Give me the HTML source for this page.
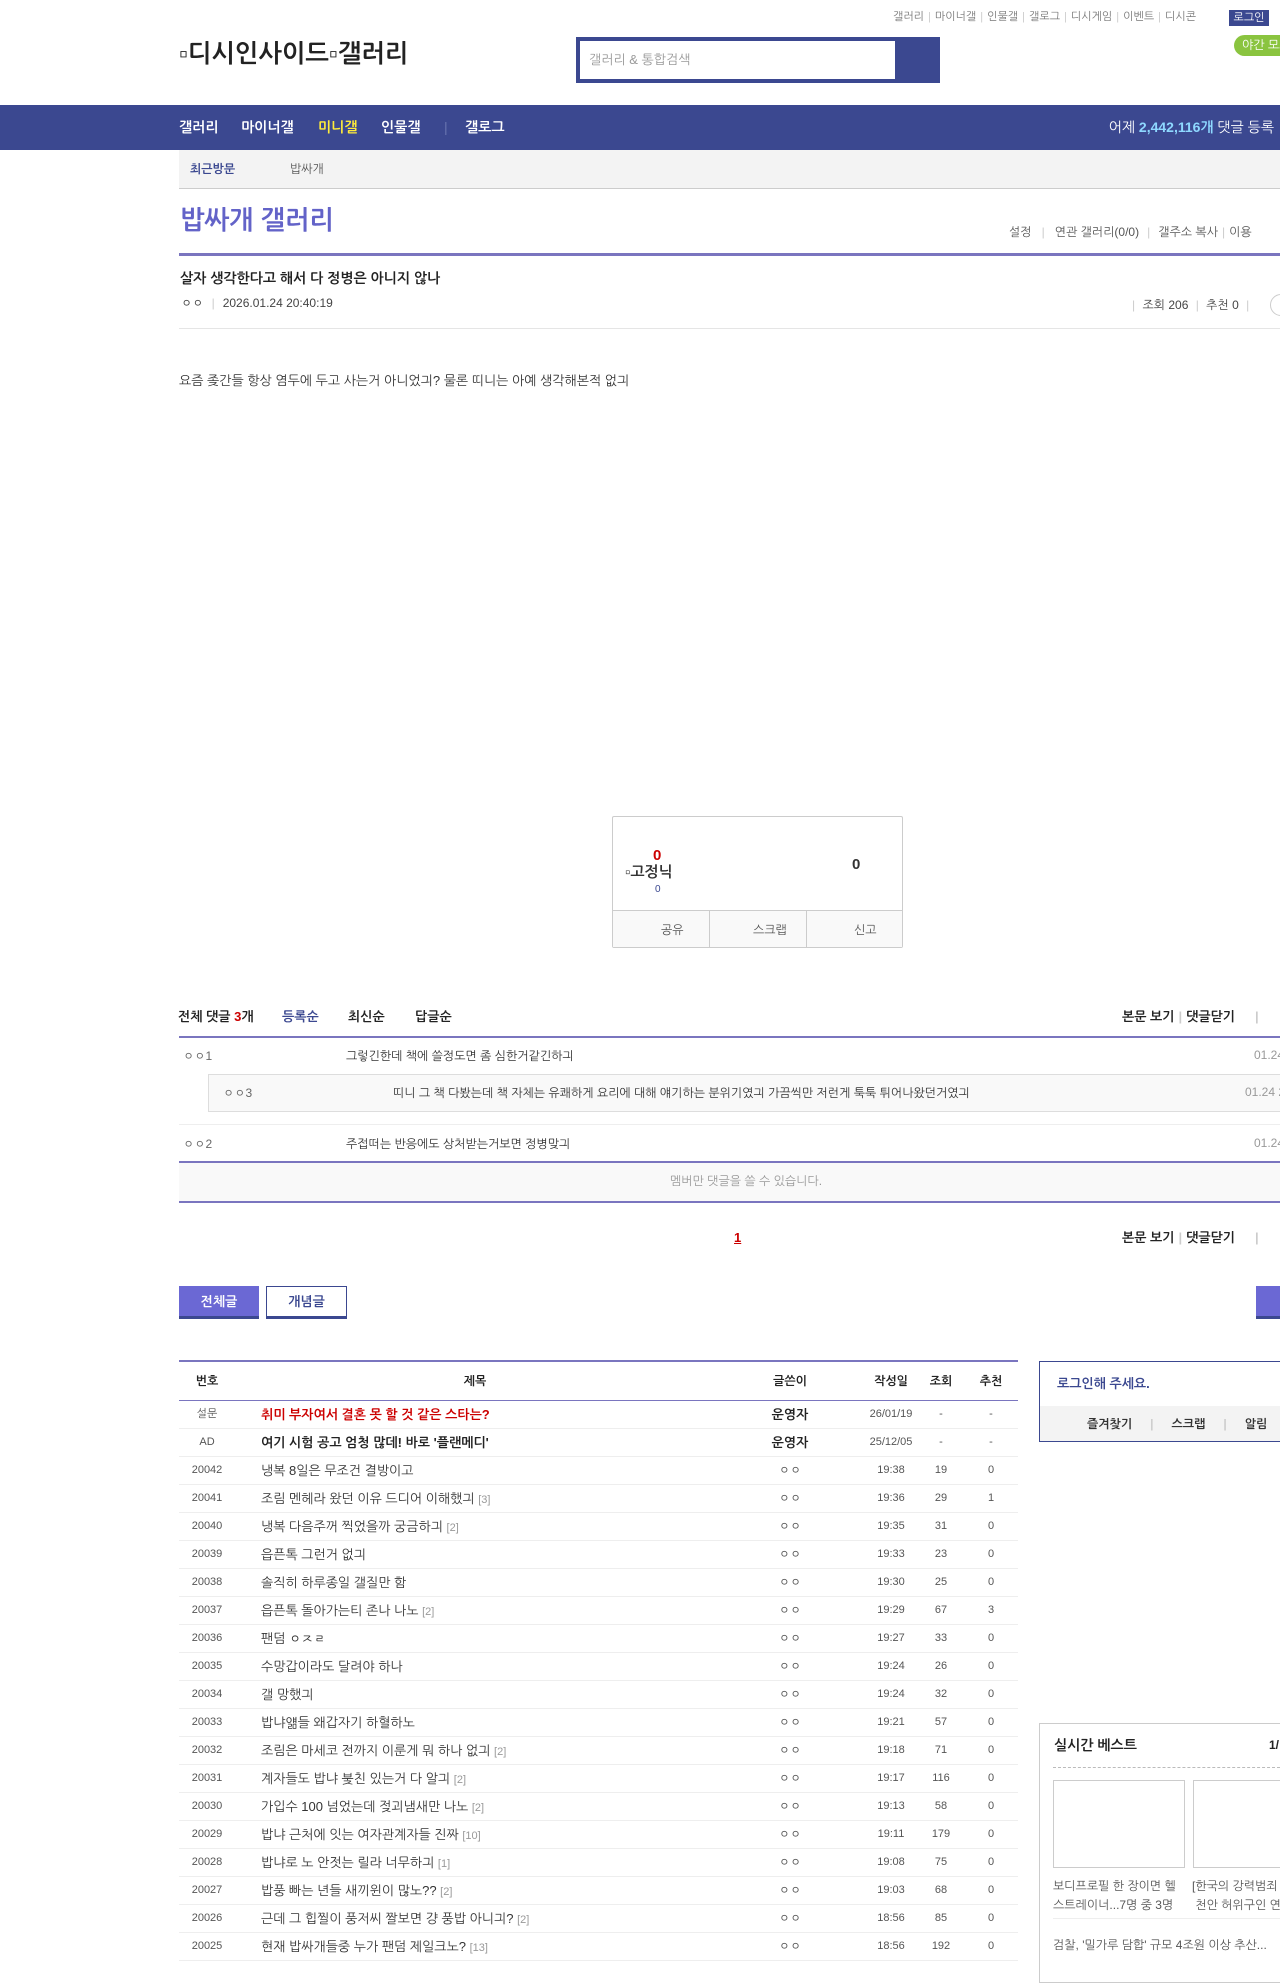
<!DOCTYPE html>
<html><head><meta charset="utf-8"><style>
*{margin:0;padding:0;box-sizing:border-box}
body{width:1280px;height:1960px;overflow:hidden;background:#fff;font-family:"Liberation Sans","NanumGothic","Noto Sans CJK KR",sans-serif;color:#333;position:relative;font-size:13px}
.a{position:absolute;white-space:nowrap}
.sep{color:#ccc;margin:0 4px}
</style></head><body>
<div class="a" style="top:10px;left:893px;font-size:11px;color:#777">갤러리<span class="sep">|</span>마이너갤<span class="sep">|</span>인물갤<span class="sep">|</span>갤로그<span class="sep">|</span>디시게임<span class="sep">|</span>이벤트<span class="sep">|</span>디시콘</div>
<div class="a" style="top:10px;left:1229px;width:40px;height:16px;background:#3b4890;color:#fff;font-size:11px;text-align:center;line-height:16px">로그인</div>
<div class="a" style="top:35px;left:1234px;width:60px;height:21px;background:#8ac43f;color:#fff;font-size:12px;line-height:21px;border-radius:11px;padding-left:8px">야간 모드</div>
<div class="a" style="top:40px;left:179px;font-size:25px;font-weight:bold;color:#222">▫디시인사이드▫갤러리</div>
<div class="a" style="top:37px;left:576px;width:364px;height:46px;background:#3b4890"></div>
<div class="a" style="top:41px;left:580px;width:315px;height:38px;background:#fff;color:#999;font-size:13px;line-height:38px;padding-left:9px">갤러리 &amp; 통합검색</div>
<div class="a" style="top:105px;left:0;width:1280px;height:45px;background:#3b4890"></div>
<div class="a" style="top:119px;left:179px;font-size:14px;font-weight:bold;color:#fff">갤러리</div>
<div class="a" style="top:119px;left:241px;font-size:14px;font-weight:bold;color:#fff">마이너갤</div>
<div class="a" style="top:119px;left:318px;font-size:14px;font-weight:bold;color:#ffec3a">미니갤</div>
<div class="a" style="top:119px;left:381px;font-size:14px;font-weight:bold;color:#fff">인물갤</div>
<div class="a" style="top:119px;left:444px;font-size:14px;color:#6874b0">|</div>
<div class="a" style="top:119px;left:465px;font-size:14px;font-weight:bold;color:#fff">갤로그</div>
<div class="a" style="top:119px;right:6px;font-size:14px;color:#fff">어제 <b style="color:#8ed8ff">2,442,116개</b> 댓글 등록</div>
<div class="a" style="top:150px;left:179px;width:1101px;height:39px;background:#f3f3f3;border-bottom:1px solid #ccc"></div>
<div class="a" style="top:162px;left:190px;font-size:12px;font-weight:bold;color:#3b4890">최근방문</div>
<div class="a" style="top:162px;left:290px;font-size:12px;color:#555">밥싸개</div>
<div class="a" style="top:205px;left:180px;font-size:26px;font-weight:bold;color:#6363c8">밥싸개 갤러리</div>
<div class="a" style="top:225px;left:1009px;font-size:12px;color:#555">설정<span class="sep" style="margin:0 10px">|</span>연관 갤러리(0/0)<span class="sep" style="margin:0 8px">|</span>갤주소 복사<span class="sep">|</span>이용</div>
<div class="a" style="top:253px;left:179px;width:1101px;height:3px;background:#7a75bf"></div>
<div class="a" style="top:270px;left:180px;font-size:14px;font-weight:bold;color:#222">살자 생각한다고 해서 다 정병은 아니지 않나</div>
<div class="a" style="top:296px;left:181px;font-size:12px;color:#444">ㅇㅇ<span class="sep" style="margin:0 8px">|</span>2026.01.24 20:40:19</div>
<div class="a" style="top:298px;left:1128px;font-size:12px;color:#444"><span class="sep">|</span> 조회 206 <span class="sep">|</span> 추천 0 <span class="sep">|</span></div>
<div class="a" style="top:294px;left:1270px;width:22px;height:22px;border:1px solid #ccc;border-radius:50%"></div>
<div class="a" style="top:328px;left:179px;width:1101px;height:1px;background:#e5e5e5"></div>
<div class="a" style="top:373px;left:179px;font-size:13px;color:#333">요즘 좆간들 항상 염두에 두고 사는거 아니었긔? 물론 띠니는 아예 생각해본적 없긔</div>
<div class="a" style="top:816px;left:612px;width:291px;height:132px;border:1px solid #ccc;border-radius:2px"></div>
<div class="a" style="top:910px;left:613px;width:289px;height:37px;background:#f9f9f9;border-top:1px solid #ccc"></div>
<div class="a" style="top:910px;left:709px;width:1px;height:38px;background:#ccc"></div>
<div class="a" style="top:910px;left:806px;width:1px;height:38px;background:#ccc"></div>
<div class="a" style="top:923px;left:661px;font-size:12px;color:#555">공유</div>
<div class="a" style="top:923px;left:753px;font-size:12px;color:#555">스크랩</div>
<div class="a" style="top:923px;left:854px;font-size:12px;color:#555">신고</div>
<div class="a" style="top:847px;left:653px;font-size:15px;font-weight:bold;color:#c00">0</div>
<div class="a" style="top:864px;left:625px;font-size:15px;font-weight:bold;color:#333">▫고정닉</div>
<div class="a" style="top:884px;left:655px;font-size:10px;color:#3b4890">0</div>
<div class="a" style="top:856px;left:852px;font-size:15px;font-weight:bold;color:#333">0</div>
<div class="a" style="top:1009px;left:178px;font-size:13px;font-weight:bold;color:#222">전체 댓글 <span style="color:#c00">3</span>개</div>
<div class="a" style="top:1009px;left:282px;font-size:13px;font-weight:bold;color:#3b4890">등록순</div>
<div class="a" style="top:1009px;left:348px;font-size:13px;font-weight:bold;color:#222">최신순</div>
<div class="a" style="top:1009px;left:415px;font-size:13px;font-weight:bold;color:#222">답글순</div>
<div class="a" style="top:1009px;left:1122px;font-size:13px;font-weight:bold;color:#222">본문 보기<span class="sep">|</span>댓글닫기<span class="sep" style="margin-left:20px">|</span></div>
<div class="a" style="top:1036px;left:179px;width:1101px;height:2px;background:#7a75bf"></div>
<div class="a" style="top:1049px;left:183px;font-size:12px;color:#666">ㅇㅇ1</div>
<div class="a" style="top:1049px;left:346px;font-size:12px;color:#333">그렇긴한데 책에 쓸정도면 좀 심한거같긴하긔</div>
<div class="a" style="top:1048px;left:1254px;font-size:12px;color:#999">01.24</div>
<div class="a" style="top:1074px;left:208px;width:1072px;height:38px;background:#f9f9f9;border:1px solid #ddd;border-right:0"></div>
<div class="a" style="top:1086px;left:223px;font-size:12px;color:#666">ㅇㅇ3</div>
<div class="a" style="top:1086px;left:393px;font-size:12px;color:#333">띠니 그 책 다봤는데 책 자체는 유쾌하게 요리에 대해 얘기하는 분위기였긔 가끔씩만 저런게 툭툭 튀어나왔던거였긔</div>
<div class="a" style="top:1085px;left:1245px;font-size:12px;color:#999">01.24 2</div>
<div class="a" style="top:1124px;left:179px;width:1101px;height:1px;background:#eee"></div>
<div class="a" style="top:1137px;left:183px;font-size:12px;color:#666">ㅇㅇ2</div>
<div class="a" style="top:1137px;left:346px;font-size:12px;color:#333">주접떠는 반응에도 상처받는거보면 정병맞긔</div>
<div class="a" style="top:1136px;left:1254px;font-size:12px;color:#999">01.24</div>
<div class="a" style="top:1161px;left:179px;width:1101px;height:42px;background:#f9f9f9;border-top:2px solid #7a75bf;border-bottom:2px solid #7a75bf"></div>
<div class="a" style="top:1174px;left:670px;font-size:12px;color:#999">멤버만 댓글을 쓸 수 있습니다.</div>
<div class="a" style="top:1230px;left:734px;font-size:13px;font-weight:bold;color:#c00;text-decoration:underline">1</div>
<div class="a" style="top:1230px;left:1122px;font-size:13px;font-weight:bold;color:#222">본문 보기<span class="sep">|</span>댓글닫기<span class="sep" style="margin-left:20px">|</span></div>
<div class="a" style="top:1286px;left:179px;width:80px;height:33px;background:#6b68d4;border-bottom:3px solid #3b4890;color:#fff;font-size:13px;font-weight:bold;text-align:center;line-height:31px">전체글</div>
<div class="a" style="top:1286px;left:266px;width:81px;height:33px;background:#fff;border:1px solid #3b4890;border-bottom:3px solid #3b4890;color:#3b4890;font-size:13px;font-weight:bold;text-align:center;line-height:29px">개념글</div>
<div class="a" style="top:1286px;left:1256px;width:40px;height:33px;background:#6b68d4;border-bottom:3px solid #3b4890"></div>
<div class="a" style="top:1360px;left:179px;width:839px;height:41px;border-top:2px solid #7a75bf;border-bottom:1px solid #7a75bf;font-size:12px;font-weight:bold;color:#222;line-height:38px">
<span style="position:absolute;left:0;width:56px;text-align:center">번호</span>
<span style="position:absolute;left:256px;width:80px;text-align:center">제목</span>
<span style="position:absolute;left:571px;width:80px;text-align:center">글쓴이</span>
<span style="position:absolute;left:672px;width:80px;text-align:center">작성일</span>
<span style="position:absolute;left:742px;width:40px;text-align:center">조회</span>
<span style="position:absolute;left:792px;width:40px;text-align:center">추천</span>
</div>
<div class="a" style="top:1401px;left:179px;width:839px" id="rows"></div>
<div class="a" style="top:1361px;left:1039px;width:260px;height:81px;border:1px solid #3b4890;background:#fff"></div>
<div class="a" style="top:1376px;left:1057px;font-size:13px;font-weight:bold;color:#3b4890">로그인해 주세요.</div>
<div class="a" style="top:1406px;left:1040px;width:240px;height:35px;background:#f3f3f3"></div>
<div class="a" style="top:1417px;left:1087px;font-size:12px;font-weight:bold;color:#333">즐겨찾기<span class="sep" style="margin:0 18px">|</span>스크랩<span class="sep" style="margin:0 18px">|</span>알림</div>
<div class="a" style="top:1723px;left:1039px;width:260px;height:260px;border:1px solid #ccc"></div>
<div class="a" style="top:1737px;left:1054px;font-size:14px;font-weight:bold;color:#222">실시간 베스트</div>
<div class="a" style="top:1738px;left:1269px;font-size:12px;font-weight:bold;color:#222">1/</div>
<div class="a" style="top:1767px;left:1053px;width:227px;border-top:1px dashed #bbb"></div>
<div class="a" style="top:1780px;left:1053px;width:132px;height:88px;border:1px solid #ccc"></div>
<div class="a" style="top:1780px;left:1193px;width:132px;height:88px;border:1px solid #ccc"></div>
<div class="a" style="top:1877px;left:1053px;font-size:12px;color:#555;line-height:19px">보디프로필 한 장이면 헬<br>스트레이너...7명 중 3명</div>
<div class="a" style="top:1877px;left:1192px;font-size:12px;color:#555;line-height:19px">[한국의 강력범죄<br>&nbsp;천안 허위구인 연</div>
<div class="a" style="top:1918px;left:1053px;width:227px;height:1px;background:#eee"></div>
<div class="a" style="top:1938px;left:1053px;font-size:12px;color:#555">검찰, '밀가루 담합' 규모 4조원 이상 추산...</div>
<script>
var d=[["설문","취미 부자여서 결혼 못 할 것 같은 스타는?","","운영자","26/01/19","-","-",1],
["AD","여기 시험 공고 엄청 많데! 바로 '플랜메디'","","운영자","25/12/05","-","-",2],
["20042","냉복 8일은 무조건 결방이고","","ㅇㅇ","19:38","19","0"],
["20041","조림 멘헤라 왔던 이유 드디어 이해했긔","[3]","ㅇㅇ","19:36","29","1"],
["20040","냉복 다음주꺼 찍었을까 궁금하긔","[2]","ㅇㅇ","19:35","31","0"],
["20039","읍픈톡 그런거 없긔","","ㅇㅇ","19:33","23","0"],
["20038","솔직히 하루종일 갤질만 함","","ㅇㅇ","19:30","25","0"],
["20037","읍픈톡 돌아가는티 존나 나노","[2]","ㅇㅇ","19:29","67","3"],
["20036","팬덤 ㅇㅈㄹ","","ㅇㅇ","19:27","33","0"],
["20035","수망갑이라도 달려야 하나","","ㅇㅇ","19:24","26","0"],
["20034","갤 망했긔","","ㅇㅇ","19:24","32","0"],
["20033","밥냐얢들 왜갑자기 하혈하노","","ㅇㅇ","19:21","57","0"],
["20032","조림은 마세코 전까지 이룬게 뭐 하나 없긔","[2]","ㅇㅇ","19:18","71","0"],
["20031","계자들도 밥냐 붖친 있는거 다 알긔","[2]","ㅇㅇ","19:17","116","0"],
["20030","가입수 100 넘었는데 젖괴냄새만 나노","[2]","ㅇㅇ","19:13","58","0"],
["20029","밥냐 근처에 잇는 여자관계자들 진짜","[10]","ㅇㅇ","19:11","179","0"],
["20028","밥냐로 노 안젓는 릴라 너무하긔","[1]","ㅇㅇ","19:08","75","0"],
["20027","밥풍 빠는 년들 새끼윈이 많노??","[2]","ㅇㅇ","19:03","68","0"],
["20026","근데 그 힙찔이 풍저씨 짤보면 걍 풍밥 아니긔?","[2]","ㅇㅇ","18:56","85","0"],
["20025","현재 밥싸개들중 누가 팬덤 제일크노?","[13]","ㅇㅇ","18:56","192","0"]];
var h="";d.forEach(function(r,i){var t=r[7]==1?'color:#c00;font-weight:bold':(r[7]==2?'color:#222;font-weight:bold':'color:#333');
h+='<div style="position:relative;height:28px;border-bottom:1px solid #eee;font-size:12px;line-height:27px;white-space:nowrap">'+
'<span style="position:absolute;left:0;width:56px;text-align:center;font-size:11px;color:#555">'+r[0]+'</span>'+
'<span style="position:absolute;left:82px;font-size:13px;'+t+'">'+r[1]+(r[2]?' <span style="color:#999;font-size:11px;font-weight:normal">'+r[2]+'</span>':'')+'</span>'+
'<span style="position:absolute;left:571px;width:80px;text-align:center;'+(r[7]?'font-weight:bold;font-size:13px;color:#222':'color:#555')+'">'+r[3]+'</span>'+
'<span style="position:absolute;left:672px;width:80px;text-align:center;font-size:11px;color:#555">'+r[4]+'</span>'+
'<span style="position:absolute;left:742px;width:40px;text-align:center;font-size:11px;color:#555">'+r[5]+'</span>'+
'<span style="position:absolute;left:792px;width:40px;text-align:center;font-size:11px;color:#555">'+r[6]+'</span></div>';});
document.getElementById('rows').innerHTML=h;
</script>
</body></html>
